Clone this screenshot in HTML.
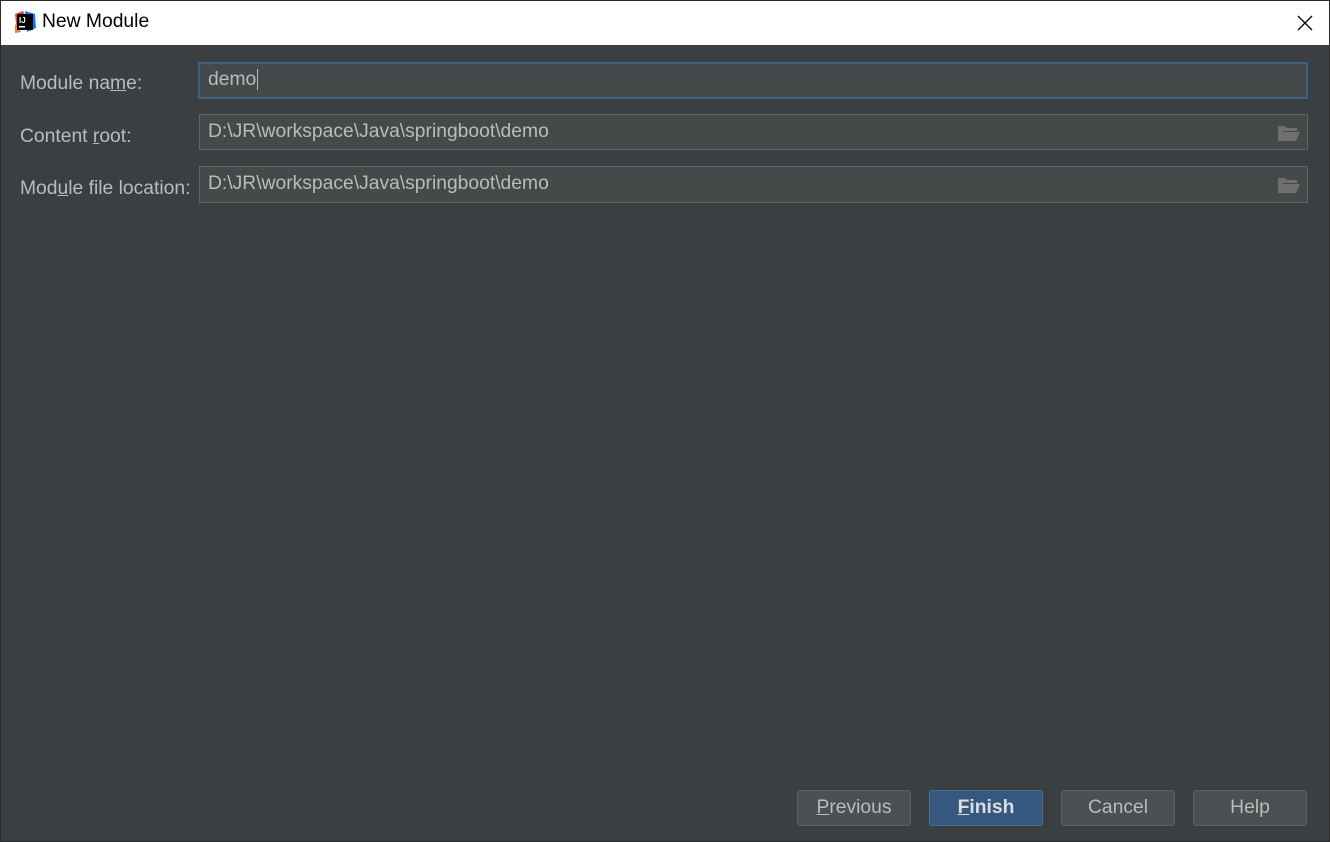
<!DOCTYPE html><html><head><style>
body{margin:0;width:1330px;height:842px;overflow:hidden;background:#3c3f41;font-family:"Liberation Sans",sans-serif;}
.win{position:absolute;left:0;top:0;width:1328px;height:840px;border:1px solid #2b2b2b;background:#3c3f41;}
.title{position:absolute;left:0;top:0;width:1328px;height:44px;background:#fff;}
.title span{position:absolute;left:41px;top:10px;font-size:19.3px;color:#000;}
.lbl{position:absolute;left:19px;font-size:19.3px;color:#bbb;}
.f{position:absolute;box-sizing:border-box;background:#45494a;border:1px solid #646464;color:#bbb;font-size:19.3px;padding-left:8px;line-height:33px;}
.btn{position:absolute;top:789px;width:114px;height:36px;box-sizing:border-box;border:1px solid #5e6060;border-radius:3px;background:#4c5052;color:#bbb;font-size:19.3px;text-align:center;line-height:34px;}
u{text-decoration:underline;}
</style></head><body><div class="win">
<div class="title">
<svg style="position:absolute;left:12px;top:9px" width="24" height="24" viewBox="0 0 24 24"><path d="M2 4 L10 1 L14 8 L4 22 Z" fill="#fc3a4a"/><path d="M12 1 L22 4 L23 18 L14 22 Z" fill="#087cfa"/><path d="M2 14 L8 22 L2 23Z" fill="#fe7a27"/><rect x="4" y="4" width="16" height="16" fill="#000"/><text x="6" y="13" font-size="8" fill="#fff" font-family="Liberation Sans" font-weight="bold">IJ</text><rect x="6" y="16" width="6" height="1.5" fill="#fff"/></svg>
<span>New Module</span>
<svg style="position:absolute;left:1296px;top:14px" width="16" height="16"><path d="M1 1L15 15M15 1L1 15" stroke="#000" stroke-width="1.3"/></svg>
</div>
<div class="lbl" style="top:72px">Module na<u>m</u>e:</div>
<div class="lbl" style="top:125px">Content <u>r</u>oot:</div>
<div class="lbl" style="top:177px">Mod<u>u</u>le file location:</div>
<div class="f" style="left:197px;top:61px;width:1110px;height:37px;border:2px solid #3d6185;line-height:31px;">demo<span style="border-left:1px solid #bbb;margin-left:1px"></span></div>
<div class="f" style="left:198px;top:113px;width:1109px;height:36px;">D:\JR\workspace\Java\springboot\demo</div>
<div class="f" style="left:198px;top:165px;width:1109px;height:37px;">D:\JR\workspace\Java\springboot\demo</div>
<svg style="position:absolute;left:1276px;top:123px" width="24" height="18"><path d="M1 2h7l2 2h10v3H6L3 16H1Z" fill="#6e7070"/><path d="M6 8h17l-4 9H1Z" fill="#6e7070"/></svg>
<svg style="position:absolute;left:1276px;top:175px" width="24" height="18"><path d="M1 2h7l2 2h10v3H6L3 16H1Z" fill="#6e7070"/><path d="M6 8h17l-4 9H1Z" fill="#6e7070"/></svg>
<div class="btn" style="left:796px"><u>P</u>revious</div>
<div class="btn" style="left:928px;background:#365880;border-color:#4c708c;color:#ddd;font-weight:bold"><u>F</u>inish</div>
<div class="btn" style="left:1060px">Cancel</div>
<div class="btn" style="left:1192px">Help</div>
</div></body></html>
